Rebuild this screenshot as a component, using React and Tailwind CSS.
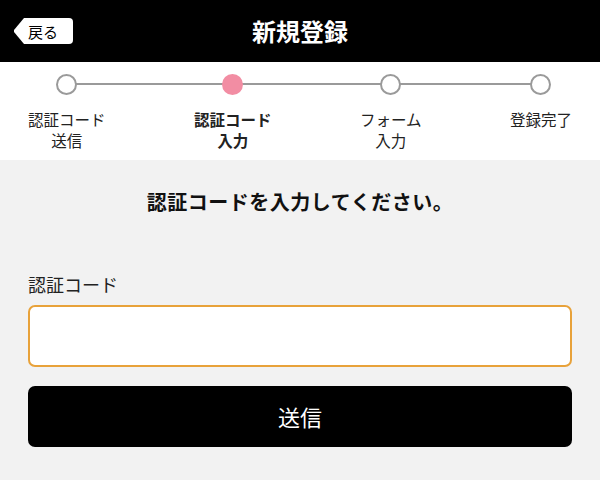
const font = { fontFamily: '"Noto Sans CJK JP", "Noto Sans", sans-serif' }

function BackButton() {
  return (
    <button className="flex items-stretch h-[26px]">
      <svg width="11" height="26" viewBox="0 0 11 26" className="block">
        <polygon points="11,0 1,12 1,14 11,26" fill="#fff" />
      </svg>
      <span className="flex items-center bg-white rounded-r-[4px] pl-[4px] pr-[15px] text-[15px] leading-none text-black">
        戻る
      </span>
    </button>
  )
}

function Step({ lines, active }) {
  return (
    <div className="flex flex-col items-center">
      <div
        className={
          active
            ? 'w-[21px] h-[21px] rounded-full bg-[#f28da3] relative z-10'
            : 'w-[21px] h-[21px] rounded-full bg-white border-2 border-[#9a9a9a] relative z-10'
        }
      />
      <div className={`mt-[14px] text-center text-[15.5px] leading-[21px] text-[#222] ${active ? 'font-bold' : ''}`}>
        {lines.map((l) => (
          <div key={l}>{l}</div>
        ))}
      </div>
    </div>
  )
}

export default function App() {
  return (
    <div className="w-[600px] h-[480px] bg-[#f2f2f2] overflow-hidden" style={font}>
      {/* header */}
      <div className="h-[62px] bg-black flex items-center px-[13px] relative">
        <BackButton />
        <div className="absolute inset-0 flex items-center justify-center pointer-events-none">
          <span className="text-white text-[24px] font-bold">新規登録</span>
        </div>
      </div>

      {/* stepper */}
      <div className="bg-white h-[98px] pt-[12px]">
        <div className="relative flex justify-between px-[28px]">
          <div className="absolute left-[67px] right-[60px] top-[9px] h-[2px] bg-[#9a9a9a]" />
          <Step lines={['認証コード', '送信']} />
          <Step lines={['認証コード', '入力']} active />
          <Step lines={['フォーム', '入力']} />
          <Step lines={['登録完了']} />
        </div>
      </div>

      {/* body */}
      <div className="px-[28px]">
        <p className="text-center text-[20px] tracking-[0.5px] font-bold text-[#111] mt-[29px] leading-[26px]">
          認証コードを入力してください。
        </p>
        <label className="block mt-[57px] text-[18px] leading-[24px] text-[#222]">認証コード</label>
        <input
          className="block mt-[9px] w-full h-[62px] bg-white border-2 border-[#e8a23a] rounded-[7px] outline-none px-3 text-[16px]"
          type="text"
        />
        <button className="mt-[19px] w-full h-[61px] bg-black rounded-[7px] text-white text-[22px]">
          送信
        </button>
      </div>
    </div>
  )
}
